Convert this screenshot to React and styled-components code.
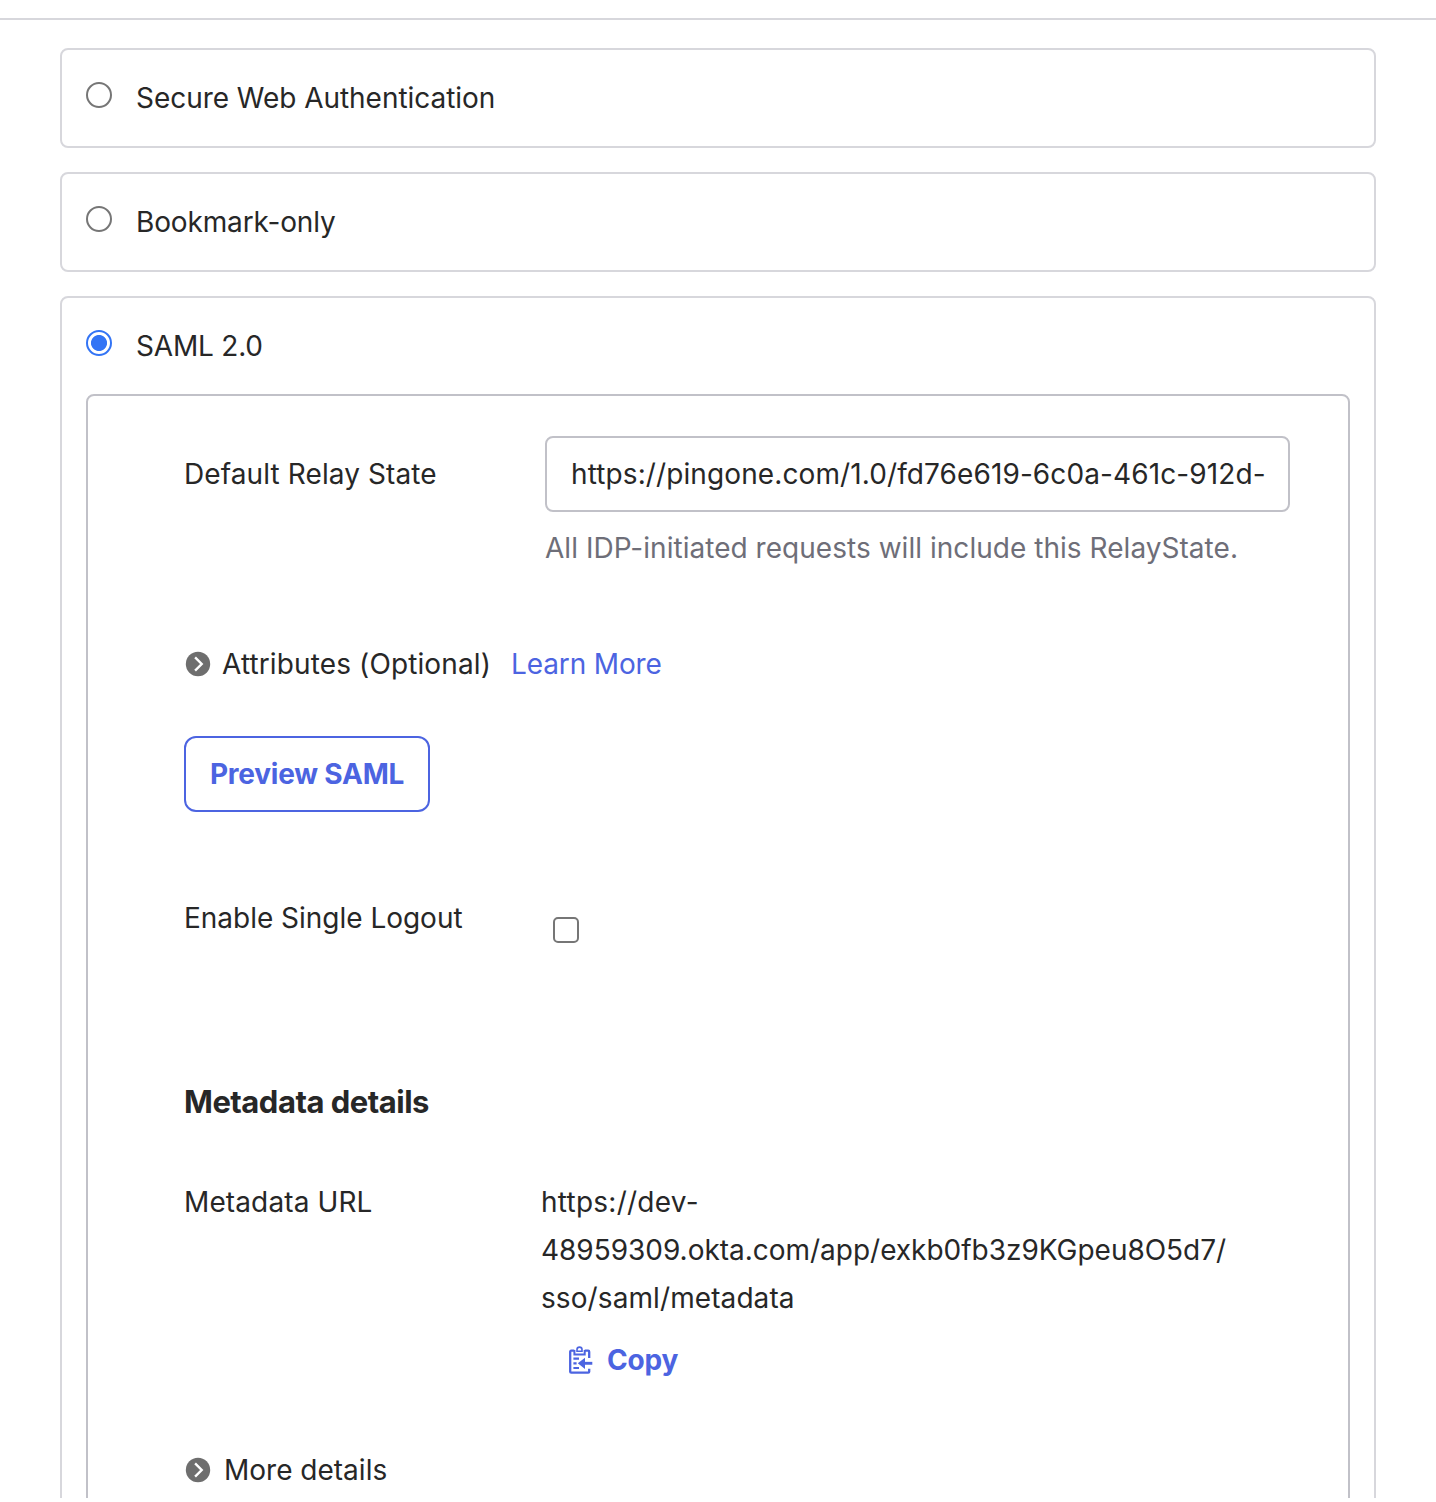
import React, { useState } from "react";
import styled, { createGlobalStyle } from "styled-components";

const GlobalStyle = createGlobalStyle`
  *, *::before, *::after { box-sizing: border-box; }
  body {
    margin: 0;
    background: #fff;
    color: #272727;
    font-family: Inter, "Liberation Sans", sans-serif;
    font-size: 28px;
    line-height: 48px;
    overflow: hidden;
  }
`;

const Page = styled.main`
  height: 1498px;
  overflow: hidden;
  padding-top: 18px;
`;

const Divider = styled.hr`
  margin: 0;
  border: 0;
  border-top: 2px solid #d7d7dc;
`;

const Options = styled.div`
  display: flex;
  flex-direction: column;
  gap: 24px;
  padding: 28px 60px 0;
`;

const Card = styled.section`
  border: 2px solid #d7d7dc;
  border-radius: 8px;
  padding: 24px;
`;

const OptionLabel = styled.label`
  display: flex;
  align-items: flex-start;
  gap: 24px;
  height: 48px;
`;

const Radio = styled.input.attrs({ type: "radio" })`
  appearance: none;
  flex: none;
  width: 26px;
  height: 26px;
  margin: 8px 0 0;
  border: 2px solid #767676;
  border-radius: 50%;
  background: #fff;

  &:checked {
    border-color: #3374f5;
    background: radial-gradient(circle, #3374f5 7.6px, #fff 8.4px);
  }
`;

const Text = styled.span`
  letter-spacing: ${(p) => p.$spacing || 0}px;
  white-space: nowrap;
`;

const Panel = styled.div`
  margin-top: 24px;
  height: 1240px;
  border: 2px solid #c1c1c8;
  border-radius: 8px;
  padding: 40px 58px 0 96px;
`;

const Row = styled.div`
  display: grid;
  grid-template-columns: ${(p) => p.$label || 361}px 1fr;
  margin-top: ${(p) => p.$top || 0}px;
`;

const RowLabel = styled.div`
  padding-top: ${(p) => p.$pad || 0}px;
`;

const TextField = styled.input`
  display: block;
  width: 100%;
  height: 76px;
  padding: 0 22px 0 24px;
  border: 2px solid #c1c1c8;
  border-radius: 8px;
  color: #272727;
  background: #fff;
  font: inherit;
  letter-spacing: 0.105px;
  outline: none;
`;

const Hint = styled.p`
  margin: 12px 0 0;
  color: #6e6e78;
  white-space: nowrap;
`;

const Disclosure = styled.div`
  display: flex;
  align-items: center;
  height: 48px;
  margin-top: ${(p) => p.$top}px;
  padding-left: 1px;
  gap: ${(p) => p.$gap}px;
`;

const Link = styled.a`
  margin-left: 9px;
  color: #4c64e1;
  text-decoration: none;
`;

const PreviewButton = styled.button`
  display: flex;
  align-items: center;
  justify-content: center;
  width: 246px;
  height: 76px;
  margin-top: 48px;
  padding: 0;
  border: 2px solid #4c64e1;
  border-radius: 12px;
  background: #fff;
  color: #4c64e1;
  font: inherit;
  font-weight: 650;
`;

const Checkbox = styled.input.attrs({ type: "checkbox" })`
  appearance: none;
  width: 26px;
  height: 26px;
  margin: 23px 0 0 8px;
  border: 2px solid #767676;
  border-radius: 5px;
  background: #fff;
`;

const Heading = styled.h2`
  margin: 135px 0 0;
  font-size: 31px;
  font-weight: 650;
  line-height: 48px;
  letter-spacing: -0.5px;
`;

const Url = styled.div`
  white-space: nowrap;
`;

const CopyButton = styled.button`
  display: flex;
  align-items: center;
  gap: 14px;
  height: 48px;
  margin: 14px 0 0 27px;
  padding: 0;
  border: 0;
  background: none;
  color: #4c64e1;
  font: inherit;
  font-weight: 650;
`;

const ArrowIcon = () => (
  <svg width="26" height="26" viewBox="0 0 26 26" fill="none">
    <circle cx="13" cy="13" r="12.2" fill="#6e6e6e" />
    <path d="M10.1 6.4 16.7 13l-6.6 6.6" stroke="#fff" strokeWidth="2.4" />
  </svg>
);

const ClipboardIcon = () => (
  <svg width="25" height="28" viewBox="0 0 25 28" fill="none" stroke="#4c64e1" strokeWidth="2.3">
    <path d="M6.3 4.7H3.2Q2.2 4.7 2.2 5.7V25.7Q2.2 26.7 3.2 26.7H20.2Q21.2 26.7 21.2 25.7V22.8M16.7 4.7H20.2Q21.2 4.7 21.2 5.7V12" />
    <path d="M6.4 4V8.4H16.7V4" strokeWidth="2" />
    <path d="M9 5.2V3.6a2.5 2.5 0 0 1 5 0v1.6z" strokeWidth="1.6" />
    <path d="M5.4 12.7h5.6M5.4 17.3h3.2M5.4 22h5.6" strokeWidth="2.2" />
    <path d="M14 17.3h10.3" strokeWidth="2.9" />
    <path d="m9.8 17.3 7.2-5.6v11.2z" fill="#4c64e1" stroke="none" />
  </svg>
);

export default function App() {
  const [method, setMethod] = useState("saml");
  const option = (id, label, spacing) => (
    <OptionLabel>
      <Radio name="method" checked={method === id} onChange={() => setMethod(id)} />
      <Text $spacing={spacing}>{label}</Text>
    </OptionLabel>
  );

  return (
    <>
      <GlobalStyle />
      <Page>
        <Divider />
        <Options>
          <Card>{option("swa", "Secure Web Authentication", -0.04)}</Card>
          <Card>{option("bookmark", "Bookmark-only", -0.14)}</Card>
          <Card>
            {option("saml", "SAML 2.0", -0.2)}
            <Panel>
              <Row>
                <RowLabel $pad={14}><Text $spacing={0.1}>Default Relay State</Text></RowLabel>
                <div>
                  <TextField readOnly value="https://pingone.com/1.0/fd76e619-6c0a-461c-912d-" />
                  <Hint><Text $spacing={0.035}>All IDP-initiated requests will include this RelayState.</Text></Hint>
                </div>
              </Row>
              <Disclosure $top={68} $gap={11}>
                <ArrowIcon />
                <Text $spacing={0.12}>Attributes (Optional)</Text>
                <Link><Text $spacing={-0.13}>Learn More</Text></Link>
              </Disclosure>
              <PreviewButton><Text $spacing={-0.22}>Preview SAML</Text></PreviewButton>
              <Row $top={82}>
                <RowLabel><Text $spacing={-0.02}>Enable Single Logout</Text></RowLabel>
                <Checkbox />
              </Row>
              <Heading>Metadata details</Heading>
              <Row $top={52} $label={357}>
                <RowLabel><Text $spacing={0.12}>Metadata URL</Text></RowLabel>
                <div>
                  <Url><Text $spacing={0.25}>https://dev-</Text></Url>
                  <Url><Text $spacing={-0.02}>48959309.okta.com/app/exkb0fb3z9KGpeu8O5d7/</Text></Url>
                  <Url><Text $spacing={0.09}>sso/saml/metadata</Text></Url>
                  <CopyButton>
                    <ClipboardIcon />
                    <Text $spacing={-0.15}>Copy</Text>
                  </CopyButton>
                </div>
              </Row>
              <Disclosure $top={62} $gap={13}>
                <ArrowIcon />
                <Text>More details</Text>
              </Disclosure>
            </Panel>
          </Card>
        </Options>
      </Page>
    </>
  );
}
